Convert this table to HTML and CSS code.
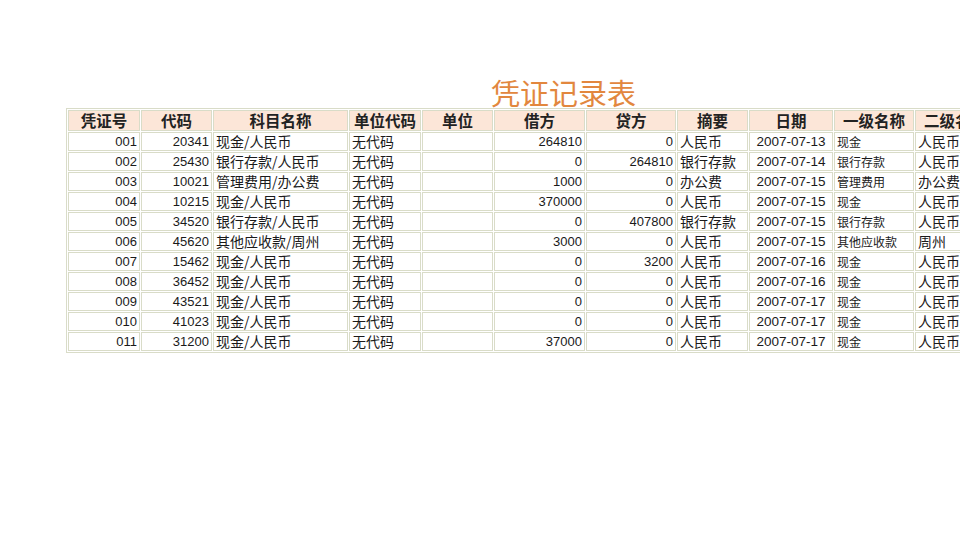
FILE: index.html
```html
<!DOCTYPE html>
<html lang="zh">
<head>
<meta charset="utf-8">
<title>凭证记录表</title>
<link rel="stylesheet" href="styles.css">
</head>
<body>
<div class="page">
  <h1 class="title">凭证记录表</h1>
  <table class="ledger">
    <colgroup>
      <col class="w72"><col class="w71"><col class="w135"><col class="w72"><col class="w71"><col class="w91"><col class="w90"><col class="w71"><col class="w84"><col class="w80"><col class="w80">
    </colgroup>
    <thead>
      <tr><th>凭证号</th><th>代码</th><th>科目名称</th><th>单位代码</th><th>单位</th><th>借方</th><th>贷方</th><th>摘要</th><th>日期</th><th>一级名称</th><th>二级名称</th></tr>
    </thead>
    <tbody>
      <tr><td class="num">001</td><td class="num">20341</td><td>现金/人民币</td><td>无代码</td><td></td><td class="num">264810</td><td class="num">0</td><td>人民币</td><td class="date">2007-07-13</td><td class="small">现金</td><td>人民币</td></tr>
      <tr><td class="num">002</td><td class="num">25430</td><td>银行存款/人民币</td><td>无代码</td><td></td><td class="num">0</td><td class="num">264810</td><td>银行存款</td><td class="date">2007-07-14</td><td class="small">银行存款</td><td>人民币</td></tr>
      <tr><td class="num">003</td><td class="num">10021</td><td>管理费用/办公费</td><td>无代码</td><td></td><td class="num">1000</td><td class="num">0</td><td>办公费</td><td class="date">2007-07-15</td><td class="small">管理费用</td><td>办公费</td></tr>
      <tr><td class="num">004</td><td class="num">10215</td><td>现金/人民币</td><td>无代码</td><td></td><td class="num">370000</td><td class="num">0</td><td>人民币</td><td class="date">2007-07-15</td><td class="small">现金</td><td>人民币</td></tr>
      <tr><td class="num">005</td><td class="num">34520</td><td>银行存款/人民币</td><td>无代码</td><td></td><td class="num">0</td><td class="num">407800</td><td>银行存款</td><td class="date">2007-07-15</td><td class="small">银行存款</td><td>人民币</td></tr>
      <tr><td class="num">006</td><td class="num">45620</td><td>其他应收款/周州</td><td>无代码</td><td></td><td class="num">3000</td><td class="num">0</td><td>人民币</td><td class="date">2007-07-15</td><td class="small">其他应收款</td><td>周州</td></tr>
      <tr><td class="num">007</td><td class="num">15462</td><td>现金/人民币</td><td>无代码</td><td></td><td class="num">0</td><td class="num">3200</td><td>人民币</td><td class="date">2007-07-16</td><td class="small">现金</td><td>人民币</td></tr>
      <tr><td class="num">008</td><td class="num">36452</td><td>现金/人民币</td><td>无代码</td><td></td><td class="num">0</td><td class="num">0</td><td>人民币</td><td class="date">2007-07-16</td><td class="small">现金</td><td>人民币</td></tr>
      <tr><td class="num">009</td><td class="num">43521</td><td>现金/人民币</td><td>无代码</td><td></td><td class="num">0</td><td class="num">0</td><td>人民币</td><td class="date">2007-07-17</td><td class="small">现金</td><td>人民币</td></tr>
      <tr><td class="num">010</td><td class="num">41023</td><td>现金/人民币</td><td>无代码</td><td></td><td class="num">0</td><td class="num">0</td><td>人民币</td><td class="date">2007-07-17</td><td class="small">现金</td><td>人民币</td></tr>
      <tr><td class="num">011</td><td class="num">31200</td><td>现金/人民币</td><td>无代码</td><td></td><td class="num">37000</td><td class="num">0</td><td>人民币</td><td class="date">2007-07-17</td><td class="small">现金</td><td>人民币</td></tr>
    </tbody>
  </table>
</div>
</body>
</html>
```
FILE: styles.css
```css
html, body {
  margin: 0;
  padding: 0;
  overflow: hidden;
  background: #ffffff;
}
body {
  width: 960px;
  height: 540px;
  font-family: "Noto Sans CJK SC", "Liberation Sans", sans-serif;
  color: #1a1a1a;
}
.page {
  padding: 77px 0 0 66px;
}
.title {
  margin: 0 0 1px 425px;
  font-family: "Noto Sans CJK SC", sans-serif;
  font-size: 29px;
  line-height: 30px;
  font-weight: 400;
  color: #e2873e;
  white-space: nowrap;
}
.ledger {
  table-layout: fixed;
  width: 931px;
  border-collapse: separate;
  border-spacing: 1px;
  border: 1px solid #d9dcc8;
}
.w72 { width: 72px; }
.w71 { width: 71px; }
.w135 { width: 135px; }
.w91 { width: 91px; }
.w90 { width: 90px; }
.w84 { width: 84px; }
.w80 { width: 80px; }
.ledger th, .ledger td {
  border: 1px solid #d9dcc8;
  padding: 0 2px;
  white-space: nowrap;
  box-sizing: border-box;
}
.ledger th {
  background: #fce6d8;
  font-size: 15.5px;
  font-weight: 700;
  line-height: 19px;
  height: 21px;
  text-align: center;
  color: #222;
}
.ledger td {
  font-size: 14px;
  line-height: 17px;
  height: 19px;
  text-align: left;
  vertical-align: middle;
}
.ledger td.num {
  font-family: "Liberation Sans", sans-serif;
  font-size: 13px;
  text-align: right;
}
.ledger td.date {
  font-family: "Liberation Sans", sans-serif;
  font-size: 13.5px;
  text-align: center;
}
.ledger td.small {
  font-size: 12px;
}
```
